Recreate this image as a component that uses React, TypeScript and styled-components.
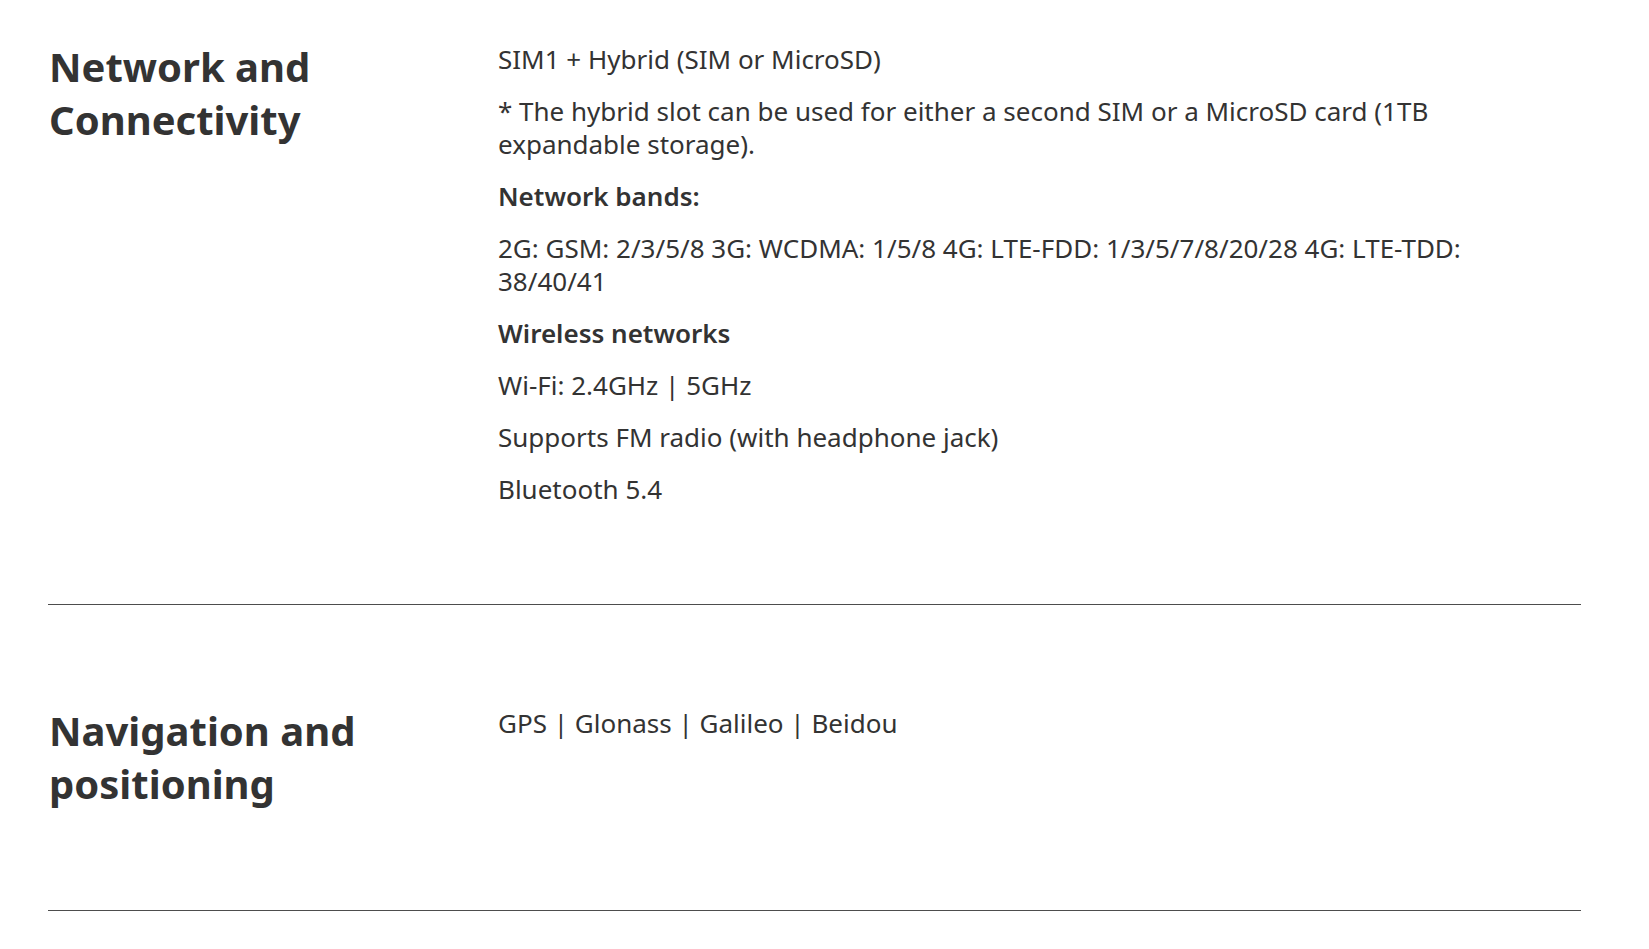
import React from "react";
import styled, { createGlobalStyle } from "styled-components";

const GlobalStyle = createGlobalStyle`
  html, body {
    margin: 0;
    padding: 0;
    background: #ffffff;
  }
  body {
    font-family: "Noto Sans", "Open Sans", sans-serif;
    color: #333333;
    -webkit-font-smoothing: antialiased;
  }
`;

const Page = styled.main`
  padding: 0 68px 0 48px;
`;

const Section = styled.section<{ $first?: boolean }>`
  display: grid;
  grid-template-columns: 450px 1fr;
  padding: ${(p) => (p.$first ? "40px 0 98px" : "99px 0 100px")};
  border-bottom: 1px solid #4d4d4d;
`;

const Heading = styled.h2`
  margin: 0;
  font-size: 40px;
  line-height: 53px;
  font-weight: 700;
  color: #333333;
  padding-left: 1px;
`;

const Body = styled.div`
  display: flex;
  flex-direction: column;
  gap: 19px;
  padding-top: 3px;
  padding-right: 50px;
`;

const Para = styled.p<{ $bold?: boolean }>`
  margin: 0;
  font-size: 26px;
  line-height: 33px;
  font-weight: ${(p) => (p.$bold ? 600 : 400)};
  color: #333333;
`;

type Spec = { heading: string[]; lines: { text: string; bold?: boolean }[] };

const sections: Spec[] = [
  {
    heading: ["Network and", "Connectivity"],
    lines: [
      { text: "SIM1 + Hybrid (SIM or MicroSD)" },
      {
        text: "* The hybrid slot can be used for either a second SIM or a MicroSD card (1TB expandable storage).",
      },
      { text: "Network bands:", bold: true },
      {
        text: "2G: GSM: 2/3/5/8 3G: WCDMA: 1/5/8 4G: LTE-FDD: 1/3/5/7/8/20/28 4G: LTE-TDD: 38/40/41",
      },
      { text: "Wireless networks", bold: true },
      { text: "Wi-Fi: 2.4GHz | 5GHz" },
      { text: "Supports FM radio (with headphone jack)" },
      { text: "Bluetooth 5.4" },
    ],
  },
  {
    heading: ["Navigation and", "positioning"],
    lines: [{ text: "GPS | Glonass | Galileo | Beidou" }],
  },
];

export default function App() {
  return (
    <>
      <GlobalStyle />
      <Page>
        {sections.map((s, i) => (
          <Section key={i} $first={i === 0}>
            <Heading>
              {s.heading[0]}
              <br />
              {s.heading[1]}
            </Heading>
            <Body>
              {s.lines.map((l, j) => (
                <Para key={j} $bold={l.bold}>
                  {l.text}
                </Para>
              ))}
            </Body>
          </Section>
        ))}
      </Page>
    </>
  );
}
